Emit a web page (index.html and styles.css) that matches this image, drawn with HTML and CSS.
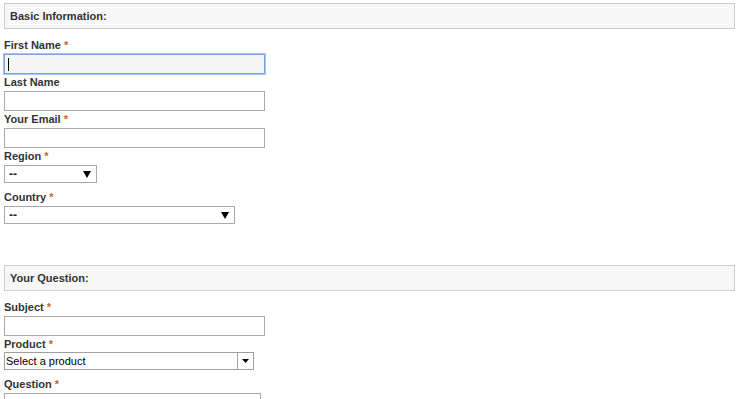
FILE: index.html
```html
<!DOCTYPE html>
<html lang="en">
<head>
  <meta charset="UTF-8">
  <meta name="viewport" content="width=device-width, initial-scale=1.0">
  <title>Contact form</title>
  <link rel="stylesheet" href="styles.css">
</head>
<body>
  <form class="contact-form">
    <div class="section-head">Basic Information:</div>
    <label class="field-label">First Name <span class="req">*</span></label>
    <div class="input-wrap">
      <input type="text" class="text-input focused">
      <span class="caret"></span>
    </div>
    <label class="field-label">Last Name</label>
    <input type="text" class="text-input">
    <label class="field-label">Your Email <span class="req">*</span></label>
    <input type="text" class="text-input">
    <label class="field-label">Region <span class="req">*</span></label>
    <select class="plain-select region">
      <option>--</option>
    </select>
    <label class="field-label">Country <span class="req">*</span></label>
    <select class="plain-select country">
      <option>--</option>
    </select>

    <div class="section-head second">Your Question:</div>
    <label class="field-label">Subject <span class="req">*</span></label>
    <input type="text" class="text-input">
    <label class="field-label short">Product <span class="req">*</span></label>
    <div class="product-select">
      <span class="product-value">Select a product</span>
      <span class="product-btn"></span>
    </div>
    <label class="field-label">Question <span class="req">*</span></label>
    <textarea class="question"></textarea>
  </form>
</body>
</html>
```

FILE: styles.css
```css
*{margin:0px;padding:0px;box-sizing:border-box;}

body {
  font-family: "Liberation Sans", Arial, sans-serif;
  color: #333;
  background: #fff;
}
.contact-form {
  width: 735px;
  padding: 3px 0 0 4px;
}
.section-head {
  height: 26px;
  line-height: 24px;
  border: 1px solid #ccc;
  background-color: #f7f7f7;
  padding-left: 5px;
  font-size: 11px;
  font-weight: bold;
  color: #333;
  margin-bottom: 8px;
}
.section-head.second {
  margin-top: 41px;
}
.field-label {
  display: block;
  height: 17px;
  line-height: 17px;
  font-size: 11px;
  font-weight: bold;
  color: #333;
}
.field-label.short {
  height: 16px;
}
.req {
  color: #c8642e;
}
.text-input {
  display: block;
  width: 261px;
  height: 20px;
  border: 1px solid #a9a9a9;
  background: #fff;
  outline: none;
}
.input-wrap {
  position: relative;
  width: 261px;
}
.text-input.focused {
  border-color: #7fa3df;
  background: #f5f5f5;
  box-shadow: 0 0 0 1px #a9c3ee;
}
.caret {
  position: absolute;
  left: 4px;
  top: 4px;
  width: 1px;
  height: 13px;
  background: #000;
}
.plain-select {
  display: block;
  height: 18px;
  border: 1px solid #a9a9a9;
  background: #fff url("data:image/svg+xml;utf8,<svg xmlns='http://www.w3.org/2000/svg' width='8' height='7'><path d='M0 0h8L4 7z' fill='black'/></svg>") no-repeat right 5px center;
  -webkit-appearance: none;
  appearance: none;
  border-radius: 0;
  font-family: "Liberation Sans", Arial, sans-serif;
  font-size: 12px;
  font-weight: bold;
  color: #222;
  padding-left: 4px;
  margin-bottom: 6px;
  outline: none;
}
.region {
  width: 93px;
}
.country {
  width: 231px;
}
.product-select {
  display: flex;
  width: 250px;
  height: 18px;
  border: 1px solid #a0a0a0;
  background: #fff;
  margin-bottom: 6px;
}
.product-value {
  flex: 1;
  font-size: 11px;
  line-height: 16px;
  color: #000;
  padding-left: 1px;
}
.product-btn {
  width: 16px;
  border-left: 1px solid #a0a0a0;
  background: url("data:image/svg+xml;utf8,<svg xmlns='http://www.w3.org/2000/svg' width='7' height='4'><path d='M0 0h7L3.5 4z' fill='black'/></svg>") no-repeat center;
}
.question {
  display: block;
  width: 257px;
  height: 80px;
  border: 1px solid #a9a9a9;
  resize: none;
}
```
